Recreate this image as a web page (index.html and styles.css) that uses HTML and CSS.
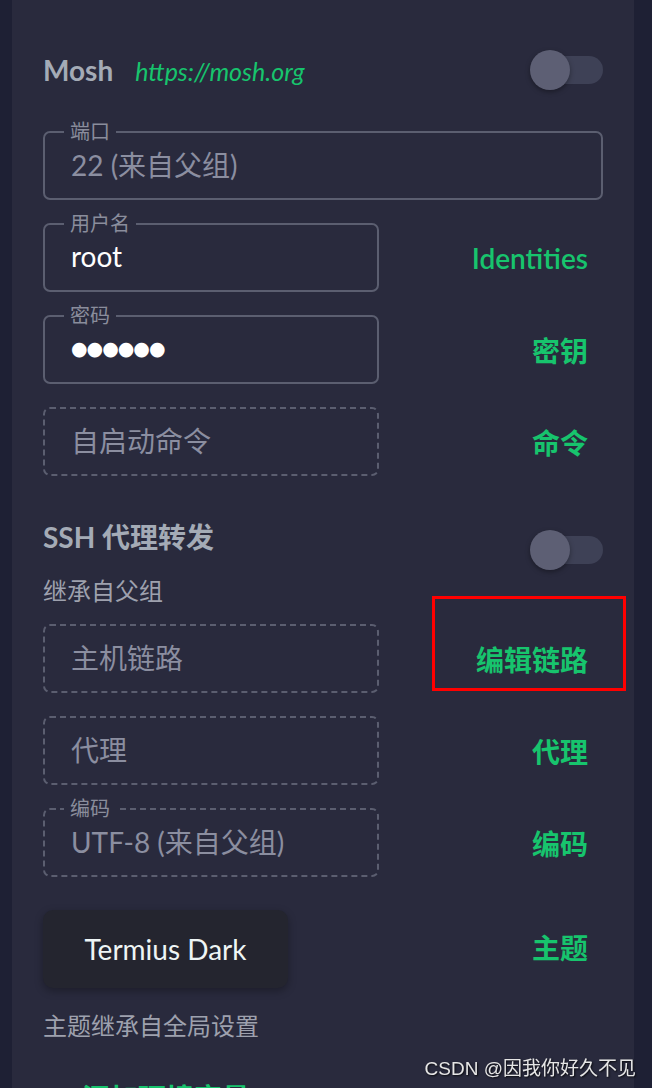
FILE: index.html
```html
<!DOCTYPE html>
<html lang="zh-CN">
<head>
    <meta charset="UTF-8">
    <meta name="viewport" content="width=device-width, initial-scale=1.0">
    <title>Host settings</title>
    <link rel="stylesheet" href="styles.css">
</head>
<body>
    <div class="panel">
        <div class="section-head mosh-head">
            <div class="head-text">
                <span class="head-title">Mosh</span>
                <span class="head-link">https://mosh.org</span>
            </div>
            <div class="toggle"><span class="knob"></span></div>
        </div>

        <div class="field wide">
            <span class="field-label">端口</span>
            <span class="field-value">22 (来自父组)</span>
        </div>

        <div class="row">
            <div class="field">
                <span class="field-label">用户名</span>
                <span class="field-value filled">root</span>
            </div>
            <div class="action">Identities</div>
        </div>

        <div class="row">
            <div class="field">
                <span class="field-label">密码</span>
                <span class="field-value filled dots">●●●●●●</span>
            </div>
            <div class="action">密钥</div>
        </div>

        <div class="row">
            <div class="field dashed">
                <span class="field-value">自启动命令</span>
            </div>
            <div class="action">命令</div>
        </div>

        <div class="section-head ssh-head">
            <div>
                <div class="head-title">SSH 代理转发</div>
                <div class="head-sub">继承自父组</div>
            </div>
            <div class="toggle"><span class="knob"></span></div>
        </div>

        <div class="row">
            <div class="field dashed">
                <span class="field-value">主机链路</span>
            </div>
            <div class="action marked">编辑链路</div>
        </div>

        <div class="row">
            <div class="field dashed">
                <span class="field-value">代理</span>
            </div>
            <div class="action">代理</div>
        </div>

        <div class="row">
            <div class="field dashed">
                <span class="field-label">编码</span>
                <span class="field-value">UTF-8 (来自父组)</span>
            </div>
            <div class="action">编码</div>
        </div>

        <div class="row theme-row">
            <div class="theme-btn">Termius Dark</div>
            <div class="action">主题</div>
        </div>
        <div class="theme-note">主题继承自全局设置</div>

        <div class="add-env">添加环境变量</div>
    </div>

    <div class="watermark">CSDN @因我你好久不见</div>
</body>
</html>
```

FILE: styles.css
```css
* {
    margin: 0;
    padding: 0;
    box-sizing: border-box;
}

html, body {
    height: 100%;
    overflow: hidden;
}

body {
    background: #1e2034;
    font-family: 'Lato', 'Noto Sans CJK SC', sans-serif;
    padding: 0 18px 0 12px;
}

.panel {
    background: #292a3d;
    min-height: 100%;
    padding: 50px 31px 0;
}

/* section headers with a switch */
.section-head {
    display: flex;
    justify-content: space-between;
    align-items: center;
}

.head-text {
    display: flex;
    align-items: baseline;
    gap: 22px;
}

.head-title {
    color: #a4abb6;
    font-size: 28px;
    font-weight: 700;
    line-height: 34px;
}

.head-link {
    color: #17c46d;
    font-size: 25px;
    font-style: italic;
}

.head-sub {
    color: #9ea1ae;
    font-size: 24px;
    line-height: 30px;
    margin-top: 22px;
}

.toggle {
    position: relative;
    width: 73px;
    height: 40px;
}

.toggle::before {
    content: '';
    display: block;
    margin: 6px 0 0 10px;
    height: 28px;
    border-radius: 14px;
    background: #3e4156;
}

.knob {
    position: absolute;
    left: 0;
    top: 0;
    width: 40px;
    height: 40px;
    border-radius: 50%;
    background: #5d5f74;
    box-shadow: 0 2px 5px rgba(0,0,0,0.35);
}

.ssh-head {
    align-items: flex-start;
    margin-top: 44px;
}

.ssh-head .toggle {
    margin-top: 10px;
}

/* input fields */
.mosh-head + .field {
    margin-top: 41px;
}

.field {
    position: relative;
    height: 69px;
    border: 2px solid #5b5e70;
    border-radius: 7px;
    display: flex;
    align-items: center;
    padding: 0 26px 3px;
}

.field.dashed {
    border-style: dashed;
}

.field-label {
    position: absolute;
    top: -14px;
    left: 19px;
    padding: 0 6px;
    background: #292a3d;
    color: #8a8d9c;
    font-size: 20px;
    line-height: 24px;
}

.field-value {
    color: #8b8ea0;
    font-size: 28px;
}

.field-value.filled {
    color: #ffffff;
}

.dots {
    font-family: 'DejaVu Sans', sans-serif;
    font-size: 19px;
    letter-spacing: -1px;
}

.row {
    display: grid;
    grid-template-columns: 336px 1fr;
    align-items: center;
    margin-top: 23px;
}

.ssh-head + .row {
    margin-top: 18px;
}

.action {
    position: relative;
    text-align: right;
    padding-right: 15px;
    color: #17c46d;
    font-size: 28px;
    font-weight: 600;
}

/* screenshot annotation */
.action.marked::after {
    content: '';
    position: absolute;
    left: 53px;
    right: -23px;
    top: -43px;
    height: 89px;
    border: 3px solid #ff0000;
}

/* theme */
.theme-row {
    grid-template-columns: 245px 1fr;
    margin-top: 33px;
}

.theme-btn {
    height: 78px;
    border-radius: 10px;
    background: #24252f;
    box-shadow: 0 3px 8px rgba(0,0,0,0.3);
    color: #eef5f5;
    font-size: 28px;
    display: flex;
    align-items: center;
    justify-content: center;
}

.theme-row .action {
    margin-top: -4px;
}

.theme-note {
    color: #9ea1ae;
    font-size: 24px;
    line-height: 32px;
    margin-top: 22px;
}

.add-env {
    color: #17c46d;
    font-size: 28px;
    font-weight: 600;
    line-height: 40px;
    padding-left: 39px;
    margin-top: 36px;
}

.watermark {
    position: fixed;
    right: 16px;
    bottom: 8px;
    color: #e6e6e6;
    font-family: 'Liberation Sans', 'Noto Sans CJK SC', sans-serif;
    font-size: 19px;
    text-shadow: 1px 1px 2px rgba(0,0,0,0.8);
}
```
